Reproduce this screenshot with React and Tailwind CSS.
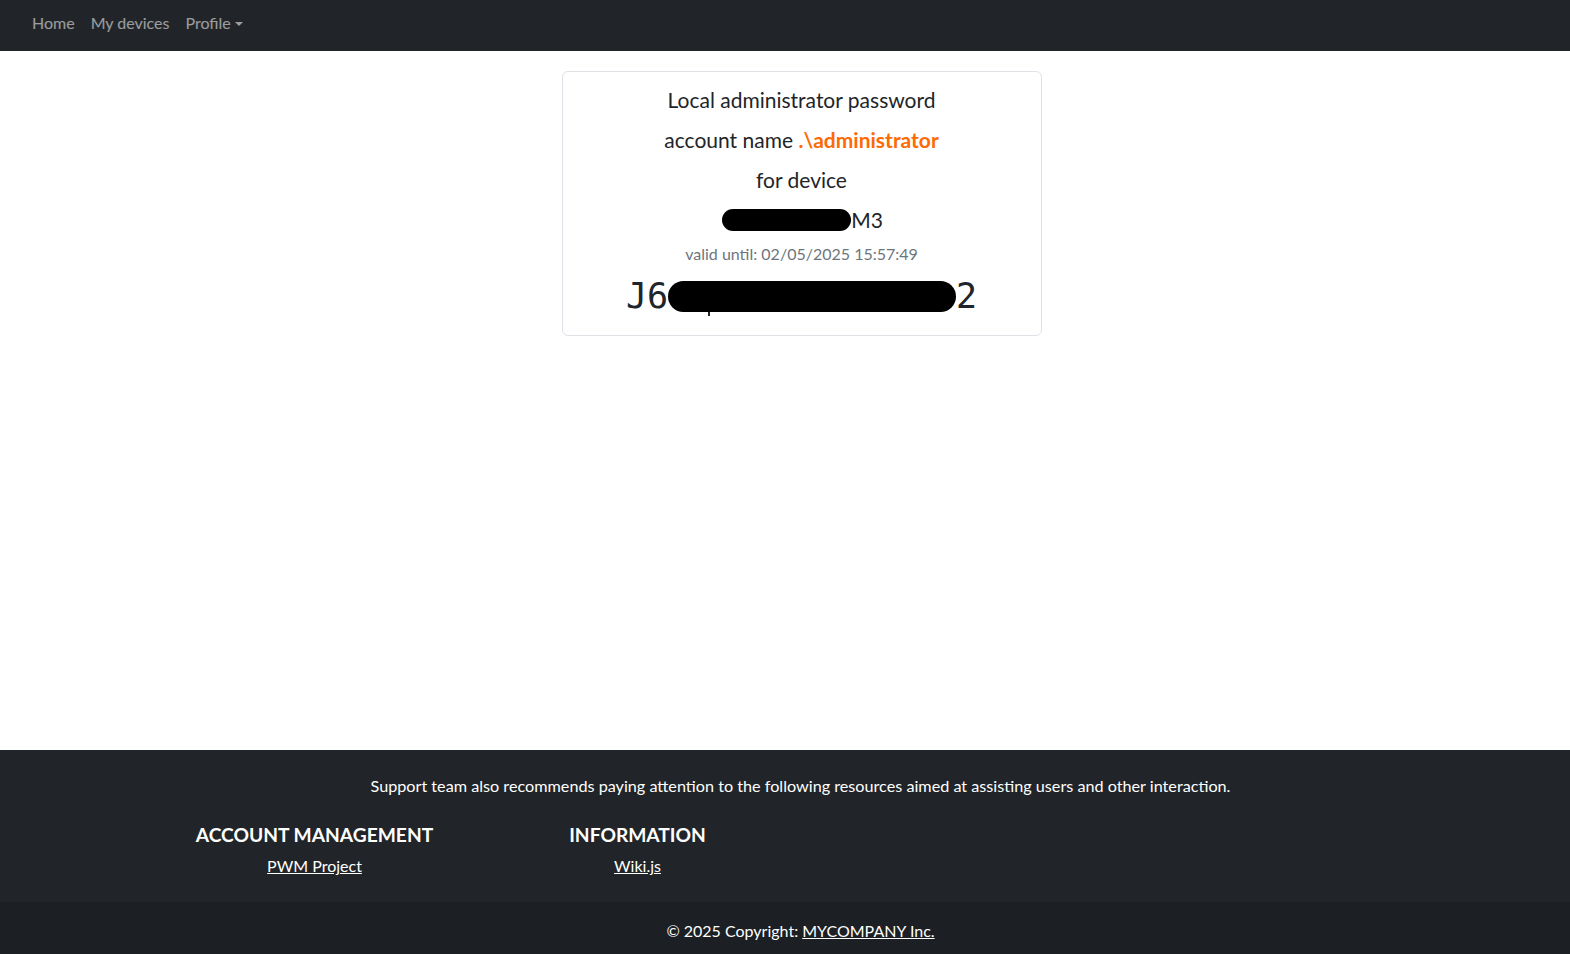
import React from 'react';

// Redacted chunk (black pill over the original text)
function Redacted({ className }) {
  return <span className={`inline-block bg-black rounded-full ${className}`} />;
}

export default function App() {
  return (
    <div className="min-h-screen bg-white flex flex-col font-['Lato','Noto_Sans',sans-serif] text-[#212529]">
      {/* Top navigation */}
      <nav className="h-[51px] bg-[#212529] flex items-center px-6 pb-[6px]">
        <a href="#" className="px-2 text-[16px] text-white/55">Home</a>
        <a href="#" className="px-2 text-[16px] text-white/55">My devices</a>
        <a href="#" className="px-2 text-[16px] text-white/55 flex items-center">
          Profile
          <span className="ml-[4px] mt-[2px] inline-block w-0 h-0 border-l-[4px] border-r-[4px] border-t-[4px] border-l-transparent border-r-transparent border-t-white/55" />
        </a>
      </nav>

      {/* Main content */}
      <main className="flex-grow flex justify-center pl-[33px] pt-[20px]">
        <div className="w-[480px] h-[265px] border border-[#dee2e6] rounded-[6px] flex flex-col items-center pt-[8px]">
          <h5 className="h-[40px] flex items-center text-[21px]">Local administrator password</h5>
          <h5 className="h-[40px] flex items-center text-[21px]">
            account name&nbsp;<span className="text-[#fd6a06] font-bold">.\administrator</span>
          </h5>
          <h5 className="h-[40px] flex items-center text-[21px]">for device</h5>
          <h5 className="h-[40px] flex items-center text-[21px] pl-[2px]">
            <Redacted className="w-[129px] h-[22px]" />
            <span>M3</span>
          </h5>
          <div className="h-[28px] flex items-center text-[16px] text-[#6c757d]">valid until: 02/05/2025 15:57:49</div>
          <div className="h-[56px] flex items-center font-['DejaVu_Sans_Mono',monospace] text-[35px] relative">
            <span>J6</span>
            <span className="relative inline-flex">
              <span className="absolute left-[40px] top-[28px] w-[2px] h-[7px] bg-[#212529]" />
              <Redacted className="w-[288px] h-[31px] relative" />
            </span>
            <span>2</span>
          </div>
        </div>
      </main>

      {/* Footer */}
      <footer className="bg-[#212529] text-white">
        <div className="pt-[24px] pb-[24px]">
          <p className="text-center text-[16.2px] pl-[31px]">
            Support team also recommends paying attention to the following resources aimed at assisting users and other interaction.
          </p>
          <div className="flex pl-[153px] mt-[23px]">
            <div className="w-[323px] flex flex-col items-center">
              <h5 className="text-[19.2px] font-bold uppercase">Account management</h5>
              <a href="#" className="underline text-[16px] mt-[4px]">PWM Project</a>
            </div>
            <div className="w-[323px] flex flex-col items-center">
              <h5 className="text-[19.2px] font-bold uppercase">Information</h5>
              <a href="#" className="underline text-[16px] mt-[4px]">Wiki.js</a>
            </div>
          </div>
        </div>
        <div className="h-[52px] bg-[#1c1f23] flex items-center justify-center pl-[31px] pt-[5px] text-[16px]">
          © 2025 Copyright:&nbsp;<a href="#" className="underline">MYCOMPANY Inc.</a>
        </div>
      </footer>
    </div>
  );
}
